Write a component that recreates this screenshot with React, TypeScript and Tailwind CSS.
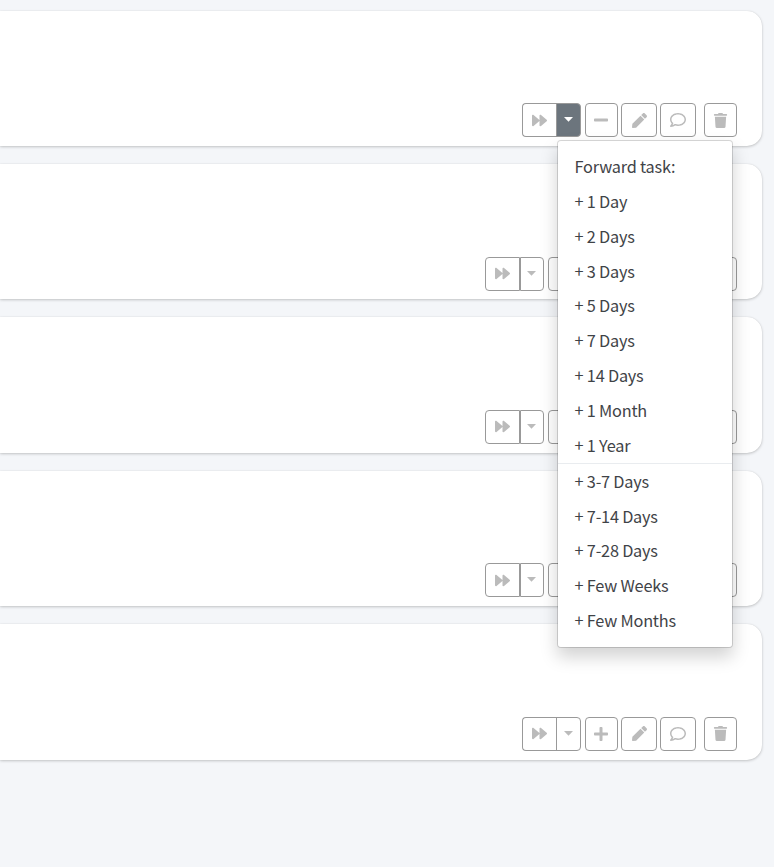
import type { ReactNode } from 'react';
import clsx from 'clsx';
import { FaForward, FaMinus, FaPen, FaPlus, FaRegComment, FaTrash } from 'react-icons/fa';

type Task = { id: number; toggle: 'minus' | 'plus'; extra?: boolean; open?: boolean };

const TASKS: Task[] = [
  { id: 1, toggle: 'minus', open: true },
  { id: 2, toggle: 'minus', extra: true },
  { id: 3, toggle: 'minus', extra: true },
  { id: 4, toggle: 'minus', extra: true },
  { id: 5, toggle: 'plus' },
];

const FIXED_STEPS = ['+ 1 Day', '+ 2 Days', '+ 3 Days', '+ 5 Days', '+ 7 Days', '+ 14 Days', '+ 1 Month', '+ 1 Year'];
const RANDOM_STEPS = ['+ 3-7 Days', '+ 7-14 Days', '+ 7-28 Days', '+ Few Weeks', '+ Few Months'];

function ToolButton({ label, className, children }: { label: string; className?: string; children?: ReactNode }) {
  return (
    <button
      type="button"
      aria-label={label}
      className={clsx('flex h-[34px] shrink-0 items-center justify-center border border-[#999]', className)}
    >
      {children}
    </button>
  );
}

function MenuItem({ children }: { children: ReactNode }) {
  return <button type="button" className="block h-[34.85px] w-full px-[16.6px] text-left tracking-[-0.22px] whitespace-nowrap">{children}</button>;
}

function ForwardMenu() {
  return (
    <div className="absolute top-[36.9px] left-px z-10 w-[176px] rounded-[4px] border border-black/15 bg-white bg-clip-padding pt-[8px] pb-[9.1px] text-[16.3px] leading-[34.85px] text-[#3f4347] shadow-[0_9px_17px_rgba(0,0,0,0.175)]">
      <div className="h-[34.85px] px-[16.6px] tracking-[-0.22px] whitespace-nowrap">Forward task:</div>
      {FIXED_STEPS.map((step) => <MenuItem key={step}>{step}</MenuItem>)}
      <div className="h-px bg-[#e9ecef]" />
      {RANDOM_STEPS.map((step) => <MenuItem key={step}>{step}</MenuItem>)}
    </div>
  );
}

function TaskCard({ task }: { task: Task }) {
  return (
    <div className="flex h-[135.4px] items-end justify-end rounded-r-[15px] bg-white pr-[25px] pb-[8.8px] shadow-[0_0_1px_rgba(0,0,0,0.125),0_1px_3px_rgba(0,0,0,0.2)]">
      <div className="flex text-[#bbb]">
        {/* Forward split button */}
        <div className="mr-1 flex">
          <ToolButton
            label="Forward"
            className={clsx('w-[35px] rounded-l-[4px]', !task.extra && 'border-r-0 pr-px')}
          >
            <FaForward size={15} />
          </ToolButton>
          <div className={clsx('relative', !task.extra && '-ml-px')}>
            <ToolButton
              label="Forward options"
              className={clsx('rounded-r-[4px] pb-px', task.extra ? 'w-[24px] pr-px' : 'w-[25px]', task.open && 'border-[#6c757d] bg-[#6c757d] text-white')}
            >
              <svg width="9" height="5" viewBox="0 0 9 5" fill="currentColor">
                <path d="M0 0h9L4.5 4.8z" />
              </svg>
            </ToolButton>
            {task.open && <ForwardMenu />}
          </div>
        </div>

        {task.extra && <ToolButton label="Complete" className="mr-1 w-[33px] rounded-[4px]" />}
        <ToolButton label="Priority" className="mr-[3px] w-[33px] rounded-[4px] pr-px">
          {task.toggle === 'plus' ? <FaPlus size={16} /> : <FaMinus size={16} />}
        </ToolButton>
        <ToolButton label="Edit" className="mr-[3px] w-[36px] rounded-[4px]">
          <FaPen size={15} />
        </ToolButton>
        <ToolButton label="Comment" className="mr-2 w-[36px] rounded-[4px]">
          <FaRegComment size={16} />
        </ToolButton>
        <ToolButton label="Delete" className="w-[33px] rounded-[4px] pr-px">
          <FaTrash size={15} />
        </ToolButton>
      </div>
    </div>
  );
}

export default function App() {
  return (
    <div className="flex h-[867px] flex-col gap-[18px] overflow-hidden bg-[#f4f6f9] pt-[10.6px] pr-3 font-['Noto_Sans_CJK_SC','Open_Sans',sans-serif]">
      {TASKS.map((task) => <TaskCard key={task.id} task={task} />)}
    </div>
  );
}
